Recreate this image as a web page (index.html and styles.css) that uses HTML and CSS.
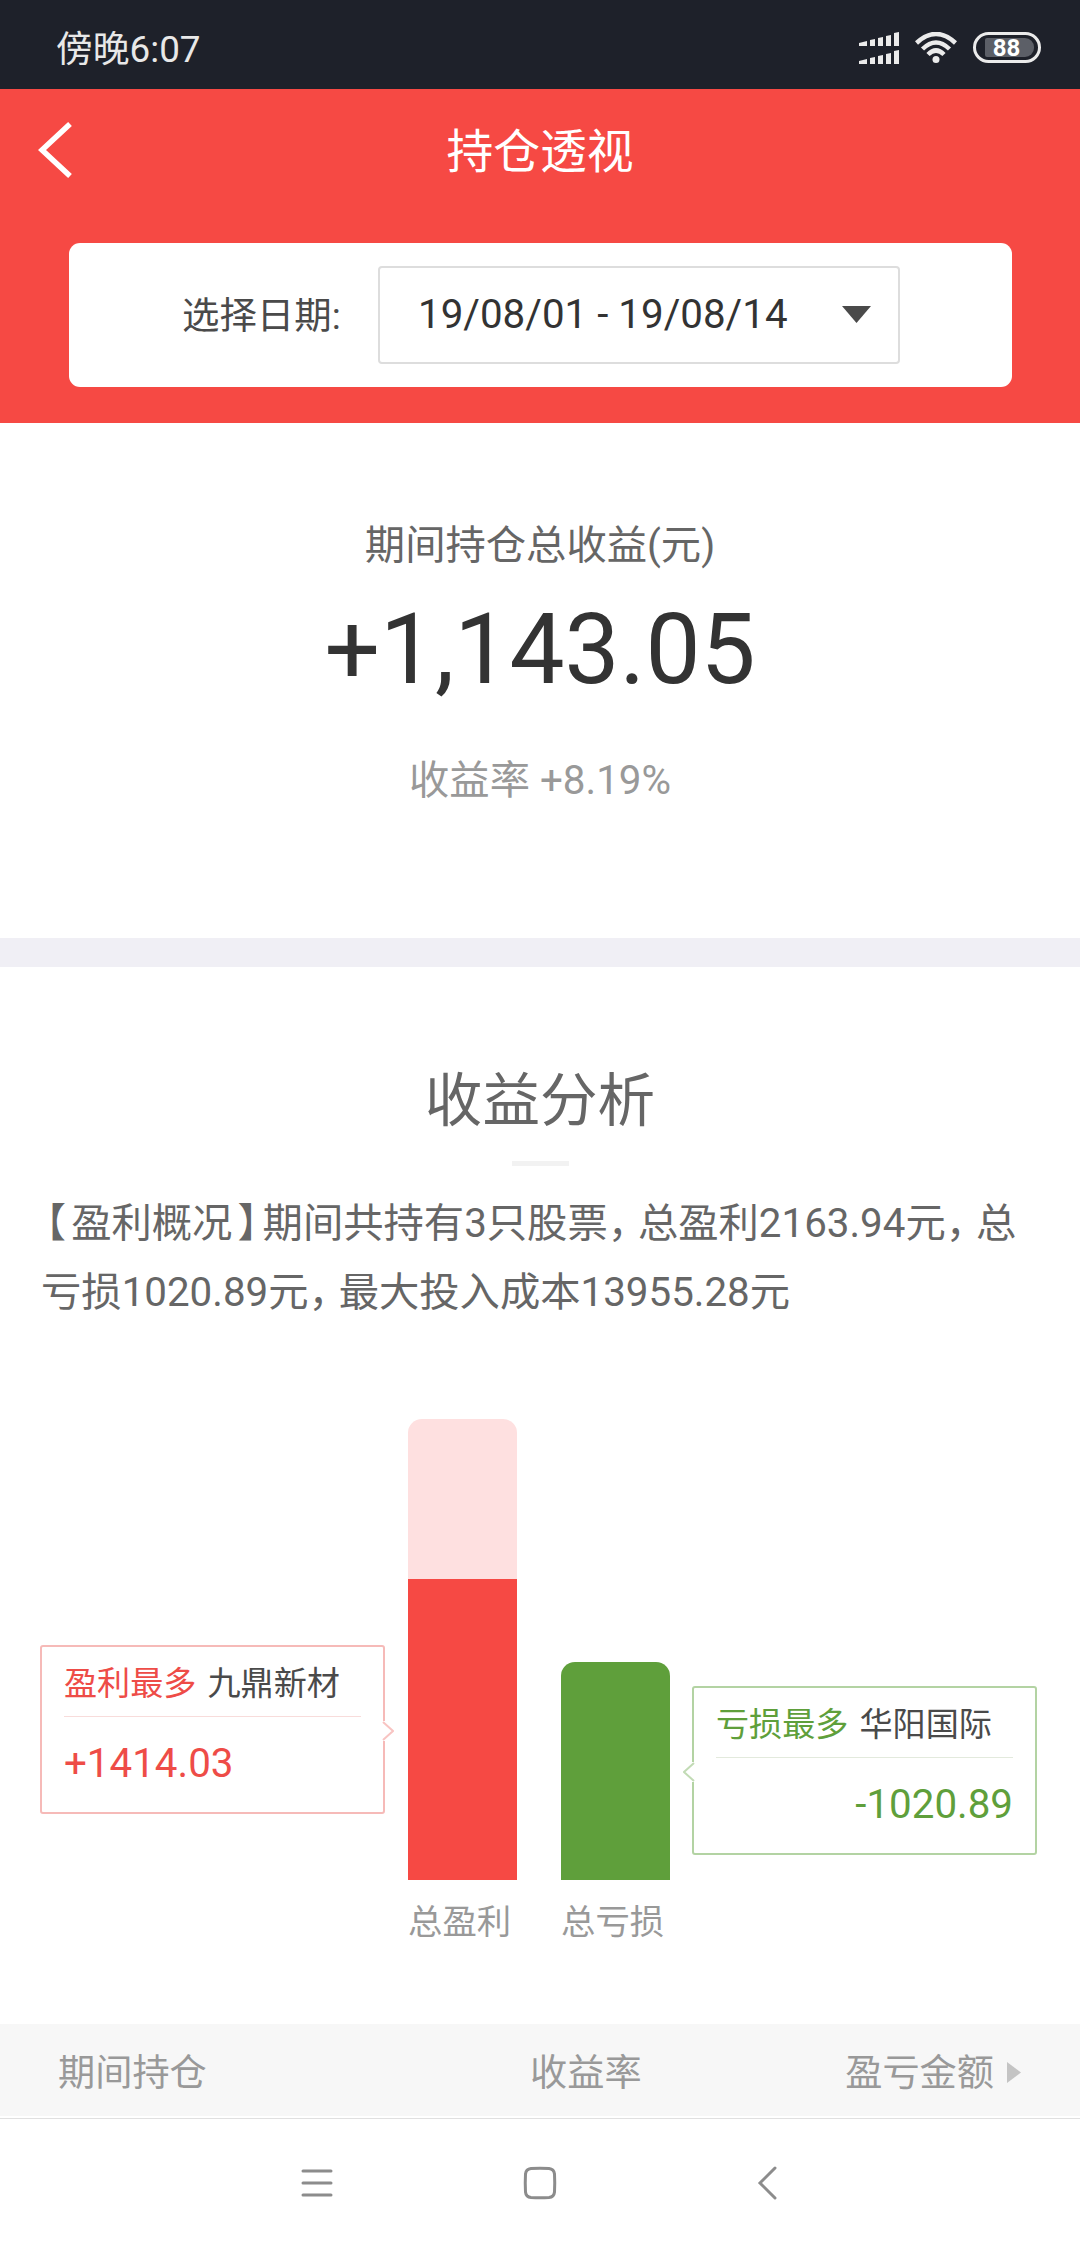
FILE: index.html
```html
<!doctype html>
<html lang="zh-CN">
  <head>
    <meta charset="utf-8">
    <meta name="viewport" content="width=device-width, initial-scale=1">
    <title>持仓透视</title>
    <link rel="stylesheet" href="styles.css">
  </head>
  <body>
    <div class="status">
      <span class="time">傍晚6:07</span>
      <svg class="signal" width="40" height="32" viewBox="0 0 40 32">
        <path d="M0 11 L8 9 V14 H0z M11 8 L16 7 V14 H11z M19 6 L24 5 V14 H19z M27 4 L32 3 V14 H27z M35 1 L40 0 V14 H35z"></path>
        <path d="M0 29 L8 27 V32 H0z M11 26 L16 25 V32 H11z M19 24 L24 23 V32 H19z M27 22 L32 21 V32 H27z M35 19 L40 18 V32 H35z"></path>
      </svg>
      <svg class="wifi" width="42" height="31" viewBox="0 0 42 31">
        <path d="M1.5 11 Q21 -7 40.5 11 M7.5 17 Q21 4 34.5 17 M13 22.5 Q21 14.500 29 22.5"></path>
        <circle cx="21" cy="27.500" r="3.500"></circle>
      </svg>
      <div class="battery"><span>88</span></div>
    </div>

    <header class="header">
      <div class="navbar">
        <svg class="back" width="36" height="56" viewBox="0 0 36 56">
          <path d="M32 2 L4 28 L32 54"></path>
        </svg>
        <h1>持仓透视</h1>
      </div>

      <div class="picker">
        <label>选择日期:</label>
        <div class="select">
          <span>19/08/01 - 19/08/14</span>
          <svg width="29" height="17" viewBox="0 0 29 17"><path d="M0 0 H29 L14.500 17z"></path></svg>
        </div>
      </div>
    </header>

    <section class="summary">
      <p class="caption">期间持仓总收益(元)</p>
      <p class="total">+1,143.05</p>
      <p class="rate">收益率 +8.19%</p>
    </section>

    <section class="analysis">
      <h2>收益分析</h2>
      <p class="overview"><span class="bracket">【</span>盈利概况<span class="bracket">】</span>期间共持有3只股票<span class="comma">，</span>总盈利2163.94元<span class="comma">，</span>总<br>亏损1020.89元<span class="comma">，</span>最大投入成本13955.28元</p>

      <div class="chart">
        <div class="callout profit">
          <p class="stock"><em>盈利最多</em><span>九鼎新材</span></p>
          <p class="amount">+1414.03</p>
          <svg class="tip" width="12" height="20" viewBox="0 0 12 20"><path d="M1 1 L11 10 L1 19"></path></svg>
        </div>

        <div class="column">
          <div class="bar profit"><div class="part"></div></div>
          <span>总盈利</span>
        </div>

        <div class="column">
          <div class="bar loss"></div>
          <span>总亏损</span>
        </div>

        <div class="callout loss">
          <p class="stock"><em>亏损最多</em><span>华阳国际</span></p>
          <p class="amount">-1020.89</p>
          <svg class="tip" width="12" height="20" viewBox="0 0 12 20"><path d="M11 1 L1 10 L11 19"></path></svg>
        </div>
      </div>
    </section>

    <div class="thead">
      <span class="name">期间持仓</span>
      <span>收益率</span>
      <span class="sort">盈亏金额
        <svg width="14" height="21" viewBox="0 0 14 21"><path d="M0 0 L14 10.500 L0 21z"></path></svg>
      </span>
    </div>

    <nav class="keys">
      <svg width="32" height="34" viewBox="0 0 32 34"><path d="M2 5 H30 M2 17 H30 M2 29 H30"></path></svg>
      <svg class="home" width="34" height="34" viewBox="0 0 34 34"><path d="M8 2.500 Q17 2 26 2.500 Q31 3 31.500 8 Q32 17 31.500 26 Q31 31 26 31.500 Q17 32 8 31.500 Q3 31 2.500 26 Q2 17 2.500 8 Q3 3 8 2.500z"></path></svg>
      <svg width="20" height="34" viewBox="0 0 20 34"><path d="M18 2 L3 17 L18 32"></path></svg>
    </nav>
  </body>
</html>
```

FILE: styles.css
```css
html {
  box-sizing: border-box;
}

*, *:before, *:after {
  box-sizing: inherit;
}

body {
  background: #fff;
  color: #666;
  display: flex;
  flex-direction: column;
  font-family: Roboto, "Noto Sans CJK SC", sans-serif;
  font-size: 40.32px;
  font-weight: 400;
  height: 2248px;
  margin: 0;
  overflow: hidden;
  width: 1080px;
}

h1, h2, p {
  font-weight: 400;
  margin: 0;
}

svg {
  display: block;
  flex: none;
}

/* system status bar */
.status {
  align-items: center;
  background: #1e212a;
  color: #e8e8e8;
  display: flex;
  height: 89px;
  padding: 6px 39px 0 56px;
}

.time {
  flex: 1;
  font-size: 36.8px;
  margin-top: -3px;
}

.status svg {
  fill: #ebebeb;
}

.signal {
  margin-right: 16px;
}

.wifi {
  margin-right: 16px;
}

.wifi path {
  fill: none;
  stroke: #ebebeb;
  stroke-width: 4.5px;
}

.battery {
  border: 3px solid #ebebeb;
  border-radius: 16px;
  height: 31px;
  padding: 3px 4px 3px 9px;
  width: 68px;
}

.battery span {
  background: #5c5f67;
  border-radius: 2px 9px 9px 2px;
  color: #fff;
  display: block;
  font-size: 24px;
  font-weight: 700;
  height: 19px;
  line-height: 20px;
  padding-right: 6px;
  text-align: center;
}

/* header */
.header {
  background: #f64944;
  height: 334px;
}

.navbar {
  align-items: center;
  display: flex;
  height: 154px;
  padding: 0 38px;
}

.back {
  margin-top: -32px;
}

.back path {
  fill: none;
  stroke: #fff;
  stroke-width: 5.5px;
}

.navbar h1 {
  color: #fff;
  flex: 1;
  font-size: 46.8px;
  line-height: 60px;
  margin: -28px 36px 0 0;
  text-align: center;
}

.picker {
  align-items: center;
  background: #fff;
  border-radius: 11px;
  display: flex;
  height: 144px;
  margin: 0 68px 0 69px;
  padding: 0 112px 0 113px;
}

.picker label {
  color: #4a4a4a;
  flex: 1;
  font-size: 37.44px;
  margin-top: -4px;
}

.select {
  align-items: center;
  border: 2px solid #ddd;
  border-radius: 4px;
  color: #333;
  display: flex;
  height: 98px;
  justify-content: space-between;
  padding: 0 27px 2px 38px;
  width: 522px;
}

.select svg {
  fill: #4a4a4a;
}

/* period total */
.summary {
  border-bottom: 29px solid #f0eff5;
  height: 544px;
  padding-top: 93px;
  text-align: center;
}

.caption {
  line-height: 60px;
}

.total {
  color: #333;
  font-size: 98px;
  line-height: 116px;
  margin-top: 16px;
}

.rate {
  color: #999;
  line-height: 60px;
  margin-top: 43px;
}

/* analysis */
.analysis {
  height: 1057px;
  padding: 93px 41px 0;
}

.analysis h2 {
  font-size: 57.6px;
  line-height: 84px;
  text-align: center;
}

.analysis h2:after {
  background: #f2f2f2;
  content: "";
  display: block;
  height: 5px;
  margin: 17px auto 0;
  width: 57px;
}

.overview {
  line-height: 69px;
  margin-top: 23px;
  white-space: nowrap;
}

.bracket {
  font-feature-settings: "halt";
  margin: 0 5px;
}

.comma {
  font-feature-settings: "halt";
  margin-right: 10px;
}

.chart {
  align-items: flex-end;
  display: flex;
  height: 619px;
  margin-right: -2px;
}

.column {
  color: #999;
  font-size: 34.4px;
  margin-right: 44px;
  width: 109px;
}

.column span {
  display: block;
  line-height: 50px;
  margin-top: 17px;
  margin-bottom: -1px;
}

.column + .callout {
  margin-left: -22px;
}

.bar {
  border-radius: 14px 14px 0 0;
  display: flex;
  flex-direction: column;
  justify-content: flex-end;
}

.bar.profit {
  background: #fee0e0;
  height: 461px;
}

.bar .part {
  background: #f64944;
  height: 301px;
}

.bar.loss {
  background: #5f9f3b;
  height: 218px;
}

.callout {
  border: 2px solid;
  border-radius: 3px;
  flex: none;
  height: 169px;
  padding: 0 22px;
  position: relative;
  width: 345px;
}

.callout.profit {
  border-color: #f6bab8;
  color: #ee4c47;
  margin: 0 23px 132px -1px;
}

.callout.loss {
  border-color: #b3d3a3;
  color: #5f9f3b;
  margin-bottom: 91px;
}

.stock {
  border-bottom: 1px solid #f8dcdb;
  font-size: 33.12px;
  height: 70px;
  line-height: 73px;
}

.loss .stock {
  border-color: #e3eadd;
}

.stock em {
  font-style: normal;
  margin-right: 11px;
}

.stock span {
  color: #4a4a4a;
}

.amount {
  line-height: 94px;
}

.loss .amount {
  text-align: right;
}

.tip {
  background: #fff;
  fill: none;
  position: absolute;
  right: -11px;
  stroke: #f8c4c2;
  stroke-width: 2px;
  top: 74px;
}

.loss .tip {
  left: -11px;
  right: auto;
  stroke: #c2dbb5;
}

/* holdings table head */
.thead {
  align-items: center;
  background: #f7f7f7;
  color: #999;
  display: flex;
  font-size: 37.2px;
  height: 92px;
  padding: 0 59px 0 58px;
}

.thead .name {
  width: 472px;
}

.sort {
  align-items: center;
  display: flex;
  gap: 13px;
  margin-left: auto;
}

.sort svg {
  fill: #c4c4c4;
  margin-top: 4px;
}

/* system keys */
.keys {
  border-top: 1px solid #e0e0e0;
  display: flex;
  margin-top: 2px;
  padding: 47px 0 0 301px;
}

.keys .home {
  margin: 0 200px 0 190px;
}

.keys path {
  fill: none;
  stroke: #8c8c8c;
  stroke-linecap: round;
  stroke-width: 3px;
}
```
